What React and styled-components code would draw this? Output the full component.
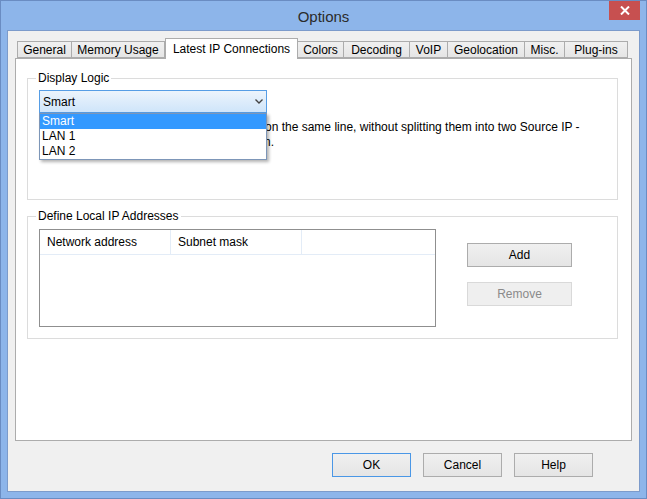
import React from 'react'
import styled, { createGlobalStyle } from 'styled-components'

const GlobalStyle = createGlobalStyle`
  body {
    margin: 0;
    font-family: "Liberation Sans", Arial, sans-serif;
    font-size: 12px;
    color: #000;
  }
`

const Window = styled.div`
  width: 647px;
  height: 499px;
  box-sizing: border-box;
  border: 1px solid #6a8cc2;
  background: #8db5ea;
  display: flex;
  flex-direction: column;
`
const TitleBar = styled.div`
  height: 29px;
  display: grid;
  grid-template-columns: 1fr auto 1fr;
  align-items: center;
`
const Title = styled.div`
  grid-column: 2;
  font-size: 15px;
  color: #2b2b2b;
  padding-top: 1px;
`
const CloseButton = styled.div`
  grid-column: 3;
  justify-self: end;
  align-self: start;
  width: 31px;
  height: 19px;
  margin-right: 6px;
  background: #c75050;
  display: flex;
  align-items: center;
  justify-content: center;
`
const Client = styled.div`
  flex: 1;
  margin: 0 6px 6px 6px;
  border: 1px solid #7c9bcb;
  background: #f0f0f0;
  padding: 7px 7px 0 7px;
  display: flex;
  flex-direction: column;
`
const TabStrip = styled.div`
  height: 20px;
  display: flex;
  align-items: flex-end;
  padding-left: 2px;
  position: relative;
  z-index: 1;
`
const Tab = styled.div`
  box-sizing: border-box;
  width: ${p => p.$w}px;
  height: ${p => (p.$active ? 21 : 17)}px;
  margin-bottom: ${p => (p.$active ? -1 : 0)}px;
  margin-left: ${p => (p.$active ? 0 : -1)}px;
  border: 1px solid #acacac;
  border-bottom: ${p => (p.$active ? 'none' : '1px solid #acacac')};
  background: ${p => (p.$active ? '#fff' : 'linear-gradient(#f0f0f0, #e5e5e5)')};
  position: relative;
  z-index: ${p => (p.$active ? 2 : 1)};
  display: flex;
  align-items: ${p => (p.$active ? 'flex-start' : 'center')};
  padding-top: ${p => (p.$active ? 3 : 1)}px;
  justify-content: center;
  white-space: nowrap;
  &:first-child {
    margin-left: 0;
  }
`
const Panel = styled.div`
  height: 383px;
  box-sizing: border-box;
  border: 1px solid #acacac;
  background: #fff;
  padding: 12px 13px 0 11px;
  display: flex;
  flex-direction: column;
  gap: 9px;
`
const Group = styled.fieldset`
  margin: 0;
  box-sizing: border-box;
  height: ${p => p.$h}px;
  border: 1px solid #dcdcdc;
  padding: ${p => p.$pt}px 11px 0 11px;
  min-width: 0;
`
const Legend = styled.legend`
  padding: 0 2px;
  margin-left: -3px;
  line-height: 14px;
`
const ComboWrap = styled.div`
  position: relative;
  width: 228px;
`
const Combo = styled.div`
  box-sizing: border-box;
  height: 23px;
  border: 1px solid #569de5;
  background: linear-gradient(#ecf4fc, #cfe5fa);
  display: flex;
  align-items: center;
  justify-content: space-between;
  padding: 0 3px 0 3px;
`
const DropList = styled.div`
  position: absolute;
  top: 100%;
  left: 0;
  width: 228px;
  box-sizing: border-box;
  border: 1px solid #7d96b8;
  background: #fff;
  box-shadow: 2px 2px 3px rgba(0, 0, 0, 0.3);
  z-index: 5;
`
const Option = styled.div`
  height: 15px;
  line-height: 15px;
  padding-left: 2px;
  background: ${p => (p.$selected ? '#3399ff' : '#fff')};
  color: ${p => (p.$selected ? '#fff' : '#000')};
`
const Description = styled.div`
  margin-top: 7px;
  line-height: 15px;
`
const Line = styled.div`
  white-space: nowrap;
  padding-left: ${p => p.$indent}px;
`
const AddressRow = styled.div`
  display: flex;
  align-items: flex-start;
`
const ListView = styled.div`
  box-sizing: border-box;
  width: 397px;
  height: 98px;
  border: 1px solid #8f8f8f;
  background: #fff;
`
const HeaderRow = styled.div`
  display: grid;
  grid-template-columns: 131px 131px 1fr;
  height: 25px;
  box-sizing: border-box;
  border-bottom: 1px solid #e3ecf7;
`
const HeaderCell = styled.div`
  border-right: ${p => (p.$last ? 'none' : '1px solid #e3ecf7')};
  padding-left: 7px;
  line-height: 25px;
`
const SideButtons = styled.div`
  display: flex;
  flex-direction: column;
  gap: 15px;
  margin-left: 31px;
  padding-top: 14px;
`
const Button = styled.div`
  box-sizing: border-box;
  width: ${p => p.$w}px;
  height: 24px;
  border: 1px solid ${p => (p.$default ? '#4a97e6' : p.$disabled ? '#d9d9d9' : '#acacac')};
  background: ${p => (p.$disabled ? '#efefef' : 'linear-gradient(#f0f0f0, #e5e5e5)')};
  color: ${p => (p.$disabled ? '#8a8a8a' : '#000')};
  display: flex;
  align-items: center;
  justify-content: center;
`
const ButtonRow = styled.div`
  display: flex;
  justify-content: flex-end;
  gap: 12px;
  margin-top: 12px;
  padding-right: 39px;
`

const tabs = [
  ['General', 55],
  ['Memory Usage', 94],
  ['Latest IP Connections', 133],
  ['Colors', 47],
  ['Decoding', 67],
  ['VoIP', 39],
  ['Geolocation', 78],
  ['Misc.', 41],
  ['Plug-ins', 64],
]

const App = () => {
  return (
    <>
      <GlobalStyle />
      <Window>
        <TitleBar>
          <Title>Options</Title>
          <CloseButton>
            <svg width="10" height="9" viewBox="0 0 10 9">
              <path d="M1 0.5 L9 8.5 M9 0.5 L1 8.5" stroke="#fff" strokeWidth="2" />
            </svg>
          </CloseButton>
        </TitleBar>
        <Client>
          <TabStrip>
            {tabs.map(([name, w]) => (
              <Tab key={name} $w={w} $active={name === 'Latest IP Connections'}>{name}</Tab>
            ))}
          </TabStrip>
          <Panel>
            <Group $h={129} $pt={5}>
              <Legend>Display Logic</Legend>
              <ComboWrap>
                <Combo>
                  <span>Smart</span>
                  <svg width="8" height="5" viewBox="0 0 8 5">
                    <path d="M0.5 0.5 L4 4 L7.5 0.5" stroke="#444" strokeWidth="1.4" fill="none" />
                  </svg>
                </Combo>
                <DropList>
                  <Option $selected>Smart</Option>
                  <Option>LAN 1</Option>
                  <Option>LAN 2</Option>
                </DropList>
              </ComboWrap>
              <Description>
                <Line $indent={226}>on the same line, without splitting them into two Source IP -</Line>
                <Line $indent={225}>n.</Line>
              </Description>
            </Group>
            <Group $h={130} $pt={6}>
              <Legend>Define Local IP Addresses</Legend>
              <AddressRow>
                <ListView>
                  <HeaderRow>
                    <HeaderCell>Network address</HeaderCell>
                    <HeaderCell>Subnet mask</HeaderCell>
                    <HeaderCell $last />
                  </HeaderRow>
                </ListView>
                <SideButtons>
                  <Button $w={105}>Add</Button>
                  <Button $w={105} $disabled>Remove</Button>
                </SideButtons>
              </AddressRow>
            </Group>
          </Panel>
          <ButtonRow>
            <Button $w={79} $default>OK</Button>
            <Button $w={79}>Cancel</Button>
            <Button $w={79}>Help</Button>
          </ButtonRow>
        </Client>
      </Window>
    </>
  )
}

export default App
